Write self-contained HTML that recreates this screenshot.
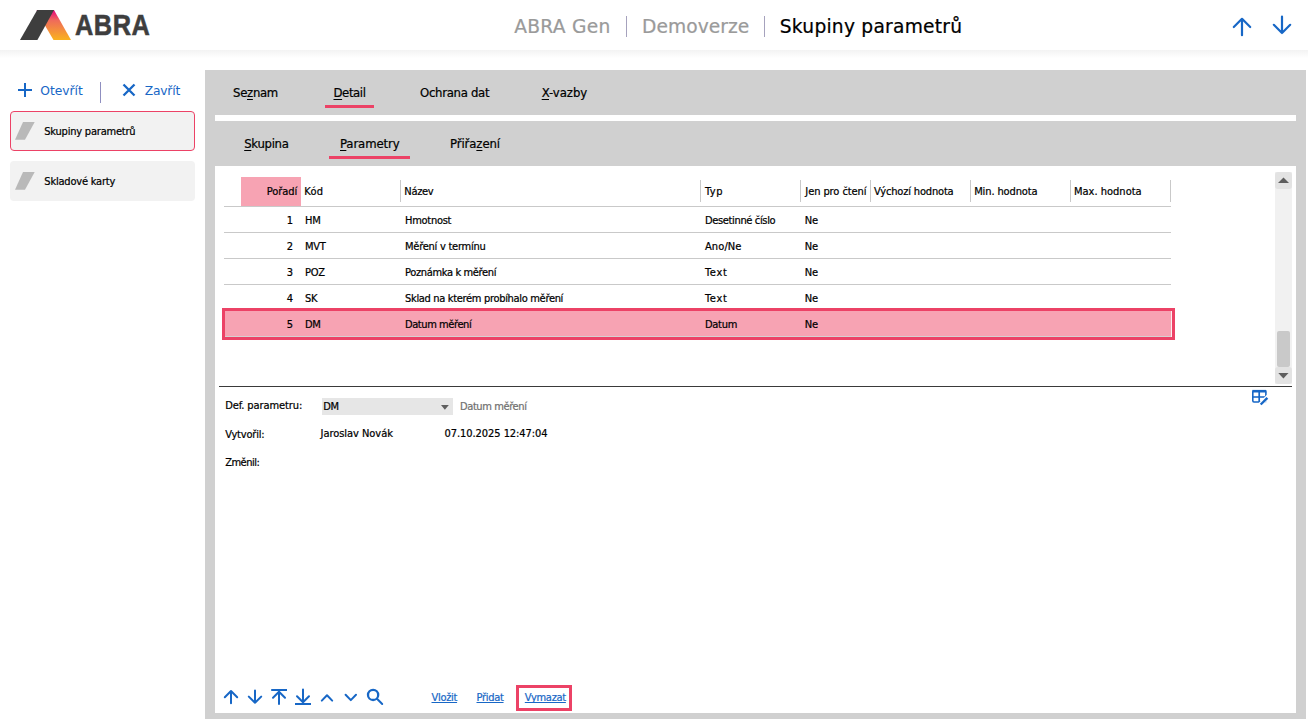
<!DOCTYPE html>
<html lang="cs">
<head>
<meta charset="utf-8">
<title>Skupiny parametrů</title>
<style>
html,body{margin:0;padding:0;background:#fff;}
body{width:1308px;height:719px;position:relative;overflow:hidden;font-family:"DejaVu Sans Condensed","DejaVu Sans","Liberation Sans",sans-serif;color:#000;}
.t{position:absolute;white-space:pre;line-height:20px;-webkit-text-stroke:0.22px currentColor;}
.b{position:absolute;}
.w{font-family:"DejaVu Sans","Liberation Sans",sans-serif;}
u{text-decoration:underline;text-underline-offset:1.5px;text-decoration-thickness:1px;}
.lnk{text-decoration:underline;text-underline-offset:1px;text-decoration-thickness:1px;text-decoration-skip-ink:none;}
svg{position:absolute;overflow:visible;}
</style>
</head>
<body>

<div class="b" style="left:0px;top:50px;width:1308px;height:8px;background:linear-gradient(#f3f3f3,#ffffff);"></div>
<svg style="left:20px;top:10px" width="52" height="30" viewBox="0 0 52 30">
<defs><linearGradient id="lg" x1="0" y1="0" x2="0" y2="1"><stop offset="0" stop-color="#e6007e"/><stop offset="0.35" stop-color="#ef6b5a"/><stop offset="1" stop-color="#f9b21e"/></linearGradient></defs>
<polygon points="16.5,0 34,0 51,30 33.5,30 25,15.5" fill="url(#lg)"/>
<polygon points="17.2,0 34,0 17.4,30 0,30" fill="#3e3e3e"/>
</svg>
<span class="t" style="left:75.4px;top:6.9px;line-height:36px;font-family:'Liberation Sans',sans-serif;font-weight:bold;font-size:29.4px;color:#3e3e3e;-webkit-text-stroke:0.55px #3e3e3e;letter-spacing:0.6px;transform-origin:0 0;transform:scaleX(0.862);">ABRA</span>
<span class="t w" style="top:17.34px;font-size:18.67px;left:514.20px;letter-spacing:0.28px;color:#9a9a9a;">ABRA Gen</span>
<div class="b" style="left:626px;top:16px;width:1px;height:21px;background:#a6a2bd;"></div>
<span class="t w" style="top:17.34px;font-size:18.67px;left:642.00px;letter-spacing:0.05px;color:#9a9a9a;">Demoverze</span>
<div class="b" style="left:764px;top:16px;width:1px;height:21px;background:#a6a2bd;"></div>
<span class="t w" style="top:17.34px;font-size:18.67px;left:779.80px;letter-spacing:0.23px;color:#000;">Skupiny parametrů</span>
<svg style="left:1230px;top:14px" width="64" height="24" viewBox="1230 14 64 24" fill="none" stroke="#1767c6" stroke-width="2.2" stroke-linecap="round" stroke-linejoin="round">
<path d="M1242 35.2V18.8M1233.8 27L1242 18.8L1250.2 27"/>
<path d="M1282 16.6V33M1273.8 24.8L1282 33L1290.2 24.8"/>
</svg>
<svg style="left:16px;top:80px" width="170" height="24" viewBox="16 80 170 24" fill="none" stroke="#1767c6" stroke-width="2" stroke-linecap="butt">
<path d="M18 90H32M25 83V97"/>
<path d="M123.5 84.5L134.5 95.5M134.5 84.5L123.5 95.5" stroke-width="2.3"/>
</svg>
<span class="t w" style="top:81.34px;font-size:12.3px;left:40.30px;letter-spacing:-0.02px;color:#1767c6;-webkit-text-stroke:0;">Otevřít</span>
<div class="b" style="left:100px;top:82px;width:1px;height:21px;background:#8f8fc0;"></div>
<span class="t w" style="top:81.34px;font-size:12.3px;left:144.70px;letter-spacing:-0.2px;color:#1767c6;-webkit-text-stroke:0;">Zavřít</span>
<div class="b" style="left:10px;top:111px;width:185px;height:40px;background:#f2f2f2;box-sizing:border-box;border:1px solid #ec4266;border-radius:4px;"></div>
<div class="b" style="left:10px;top:161px;width:185px;height:40px;background:#f2f2f2;border-radius:4px;"></div>
<svg style="left:15px;top:122px" width="20" height="18" viewBox="0 0 20 18"><polygon points="8,0 19.7,0 10,17.7 0,17.7" fill="#b9b9b9"/></svg>
<svg style="left:15px;top:172px" width="20" height="18" viewBox="0 0 20 18"><polygon points="8,0 19.7,0 10,17.7 0,17.7" fill="#b9b9b9"/></svg>
<span class="t " style="top:122.09px;font-size:11px;left:44.30px;letter-spacing:-0.21px;">Skupiny parametrů</span>
<span class="t " style="top:172.09px;font-size:11px;left:44.30px;letter-spacing:-0.2px;">Skladové karty</span>
<div class="b" style="left:205px;top:70px;width:1101px;height:649px;background:#d0d0d0;"></div>
<div class="b" style="left:215px;top:115px;width:1081px;height:6px;background:#fff;"></div>
<div class="b" style="left:215px;top:166px;width:1081px;height:547px;background:#fff;"></div>
<span class="t " style="top:82.50px;font-size:13px;left:233.00px;letter-spacing:-0.3px;">Se<u>z</u>nam</span>
<span class="t " style="top:82.50px;font-size:13px;left:333.50px;letter-spacing:-0.4px;"><u>D</u>etail</span>
<span class="t " style="top:82.50px;font-size:13px;left:420.00px;letter-spacing:-0.3px;">Ochrana dat</span>
<span class="t " style="top:82.50px;font-size:13px;left:541.70px;letter-spacing:-0.05px;"><u>X</u>-vazby</span>
<div class="b" style="left:325px;top:105px;width:49px;height:3px;background:#ec4266;"></div>
<span class="t " style="top:133.50px;font-size:13px;left:244.20px;letter-spacing:-0.3px;"><u>S</u>kupina</span>
<span class="t " style="top:133.50px;font-size:13px;left:340.00px;letter-spacing:-0.12px;"><u>P</u>arametry</span>
<span class="t " style="top:133.50px;font-size:13px;left:450.00px;letter-spacing:-0.1px;">Přiřa<u>z</u>ení</span>
<div class="b" style="left:329px;top:156px;width:81px;height:3px;background:#ec4266;"></div>
<div class="b" style="left:241px;top:177px;width:60px;height:29px;background:#f7a3b3;"></div>
<div class="b" style="left:224px;top:206px;width:947px;height:1px;background:#c9c9c9;"></div>
<div class="b" style="left:224px;top:232px;width:947px;height:1px;background:#c9c9c9;"></div>
<div class="b" style="left:224px;top:258px;width:947px;height:1px;background:#c9c9c9;"></div>
<div class="b" style="left:224px;top:284px;width:947px;height:1px;background:#c9c9c9;"></div>
<div class="b" style="left:400px;top:180px;width:1px;height:22px;background:#c9c9c9;"></div>
<div class="b" style="left:700px;top:180px;width:1px;height:22px;background:#c9c9c9;"></div>
<div class="b" style="left:800px;top:180px;width:1px;height:22px;background:#c9c9c9;"></div>
<div class="b" style="left:870px;top:180px;width:1px;height:22px;background:#c9c9c9;"></div>
<div class="b" style="left:970px;top:180px;width:1px;height:22px;background:#c9c9c9;"></div>
<div class="b" style="left:1070px;top:180px;width:1px;height:22px;background:#c9c9c9;"></div>
<div class="b" style="left:1170px;top:180px;width:1px;height:22px;background:#c9c9c9;"></div>
<span class="t " style="top:182.09px;font-size:11px;right:1010.80px;letter-spacing:-0.05px;">Pořadí</span>
<span class="t " style="top:182.09px;font-size:11px;left:304.30px;letter-spacing:0.25px;">Kód</span>
<span class="t " style="top:182.09px;font-size:11px;left:404.30px;letter-spacing:-0.3px;">Název</span>
<span class="t " style="top:182.09px;font-size:11px;left:705.00px;letter-spacing:0.5px;">Typ</span>
<span class="t " style="top:182.09px;font-size:11px;left:805.30px;letter-spacing:-0.08px;">Jen pro čtení</span>
<span class="t " style="top:182.09px;font-size:11px;left:874.00px;letter-spacing:-0.17px;">Výchozí hodnota</span>
<span class="t " style="top:182.09px;font-size:11px;left:974.20px;letter-spacing:-0.12px;">Min. hodnota</span>
<span class="t " style="top:182.09px;font-size:11px;left:1074.00px;letter-spacing:0.0px;">Max. hodnota</span>
<div class="b" style="left:222px;top:308px;width:953px;height:32px;background:#f7a3b3;box-sizing:border-box;border:3px solid #ec4266;"></div>
<div class="b" style="left:225px;top:336px;width:946px;height:1px;background:#d5d0d1;"></div>
<div class="b" style="left:1171px;top:311px;width:1px;height:26px;background:#fbeef0;"></div>
<span class="t " style="top:211.09px;font-size:11px;right:1015.00px;">1</span>
<span class="t " style="top:211.09px;font-size:11px;left:305.00px;letter-spacing:-0.3px;">HM</span>
<span class="t " style="top:211.09px;font-size:11px;left:405.00px;letter-spacing:-0.27px;">Hmotnost</span>
<span class="t " style="top:211.09px;font-size:11px;left:705.00px;letter-spacing:-0.35px;">Desetinné číslo</span>
<span class="t " style="top:211.09px;font-size:11px;left:804.80px;letter-spacing:-0.3px;">Ne</span>
<span class="t " style="top:237.09px;font-size:11px;right:1015.00px;">2</span>
<span class="t " style="top:237.09px;font-size:11px;left:305.00px;letter-spacing:-0.3px;">MVT</span>
<span class="t " style="top:237.09px;font-size:11px;left:405.00px;letter-spacing:-0.25px;">Měření v termínu</span>
<span class="t " style="top:237.09px;font-size:11px;left:705.00px;letter-spacing:0.1px;">Ano/Ne</span>
<span class="t " style="top:237.09px;font-size:11px;left:804.80px;letter-spacing:-0.3px;">Ne</span>
<span class="t " style="top:263.09px;font-size:11px;right:1015.00px;">3</span>
<span class="t " style="top:263.09px;font-size:11px;left:305.00px;letter-spacing:-0.3px;">POZ</span>
<span class="t " style="top:263.09px;font-size:11px;left:405.00px;letter-spacing:-0.35px;">Poznámka k měření</span>
<span class="t " style="top:263.09px;font-size:11px;left:705.00px;letter-spacing:0.7px;">Text</span>
<span class="t " style="top:263.09px;font-size:11px;left:804.80px;letter-spacing:-0.3px;">Ne</span>
<span class="t " style="top:289.09px;font-size:11px;right:1015.00px;">4</span>
<span class="t " style="top:289.09px;font-size:11px;left:305.00px;letter-spacing:-0.3px;">SK</span>
<span class="t " style="top:289.09px;font-size:11px;left:405.00px;letter-spacing:-0.32px;">Sklad na kterém probíhalo měření</span>
<span class="t " style="top:289.09px;font-size:11px;left:705.00px;letter-spacing:0.7px;">Text</span>
<span class="t " style="top:289.09px;font-size:11px;left:804.80px;letter-spacing:-0.3px;">Ne</span>
<span class="t " style="top:315.09px;font-size:11px;right:1015.00px;">5</span>
<span class="t " style="top:315.09px;font-size:11px;left:305.00px;letter-spacing:-0.3px;">DM</span>
<span class="t " style="top:315.09px;font-size:11px;left:405.00px;letter-spacing:-0.42px;">Datum měření</span>
<span class="t " style="top:315.09px;font-size:11px;left:705.00px;letter-spacing:-0.3px;">Datum</span>
<span class="t " style="top:315.09px;font-size:11px;left:804.80px;letter-spacing:-0.3px;">Ne</span>
<div class="b" style="left:1275px;top:172px;width:17px;height:212px;background:#f1f1f1;"></div>
<div class="b" style="left:1275px;top:172px;width:17px;height:17px;background:#e3e3e3;border-radius:3px;"></div>
<div class="b" style="left:1275px;top:367px;width:17px;height:17px;background:#e3e3e3;border-radius:3px;"></div>
<div class="b" style="left:1277px;top:331px;width:13px;height:36px;background:#c9c9c9;border-radius:2px;"></div>
<svg style="left:1275px;top:172px" width="17" height="212" viewBox="1275 172 17 212"><polygon points="1278,183 1283.5,177.4 1289,183" fill="#5e5e5e"/><polygon points="1278.3,373 1288.5,373 1283.4,378.4" fill="#5e5e5e"/></svg>
<div class="b" style="left:219px;top:386px;width:1073px;height:1px;background:#3a3a3a;"></div>
<svg style="left:1251px;top:389px" width="18" height="18" viewBox="1251 389 18 18" fill="none" stroke="#1767c6">
<rect x="1252.8" y="390.7" width="13.1" height="11.3" rx="1.2" stroke-width="1.6"/>
<path d="M1252.4 391.2H1266.3" stroke-width="2.6"/>
<path d="M1252.8 397H1265.9" stroke-width="1.55"/><path d="M1259.2 391V402" stroke-width="1.7"/>
<path d="M1257.8 407.2L1269.6 395.4" stroke="#fff" stroke-width="4.6"/>
<path d="M1260.7 404.5L1267.4 397.8" stroke-width="2.35"/>
</svg>
<span class="t " style="top:395.69px;font-size:11px;left:225.20px;letter-spacing:-0.1px;">Def. parametru:</span>
<div class="b" style="left:322px;top:398px;width:131px;height:17px;background:#e6e6e6;"></div>
<span class="t " style="top:397.09px;font-size:11px;left:323.30px;letter-spacing:-0.3px;">DM</span>
<svg style="left:440px;top:404px" width="10" height="7" viewBox="440 404 10 7"><polygon points="441,405 448.8,405 444.9,409.8" fill="#5e5e5e"/></svg>
<span class="t " style="top:396.79px;font-size:11px;left:460.00px;letter-spacing:-0.4px;color:#707070;">Datum měření</span>
<span class="t " style="top:424.59px;font-size:11px;left:225.20px;letter-spacing:-0.2px;">Vytvořil:</span>
<span class="t " style="top:423.89px;font-size:11px;left:320.60px;letter-spacing:-0.05px;">Jaroslav Novák</span>
<span class="t " style="top:423.89px;font-size:11px;left:444.50px;letter-spacing:-0.06px;">07.10.2025 12:47:04</span>
<span class="t " style="top:452.89px;font-size:11px;left:225.20px;letter-spacing:-0.5px;">Změnil:</span>
<svg style="left:222px;top:687px" width="164" height="20" viewBox="222 687 164 20" fill="none" stroke="#1767c6" stroke-width="2" stroke-linecap="round" stroke-linejoin="round">
<path d="M231 703.2V691M224.8 697.2L231 691L237.2 697.2"/>
<path d="M255 690.6V702.8M248.8 696.6L255 702.8L261.2 696.6"/>
<path d="M271.2 690H287" stroke-linecap="butt"/><path d="M279 704V691.6M273 697.8L279 691.8L285 697.8"/>
<path d="M295 704H311" stroke-linecap="butt"/><path d="M303 689.6V702M297 696.2L303 702.2L309 696.2"/>
<path d="M321.8 700.6L327 695.2L332.2 700.6"/>
<path d="M345.6 694.8L350.8 700.1L356 694.8"/>
<circle cx="373.1" cy="694.9" r="5.1" stroke-width="2.3"/><path d="M377 698.8L382.2 704"/>
</svg>
<span class="t lnk" style="top:688.09px;font-size:11px;left:431.50px;letter-spacing:-0.3px;color:#1767c6;">Vložit</span>
<span class="t lnk" style="top:688.09px;font-size:11px;left:476.50px;letter-spacing:-0.3px;color:#1767c6;">Přidat</span>
<span class="t lnk" style="top:688.09px;font-size:11px;left:524.80px;letter-spacing:-0.3px;color:#1767c6;">Vymazat</span>
<div class="b" style="left:516px;top:685px;width:56px;height:26px;background:transparent;box-sizing:border-box;border:3px solid #ec4266;"></div>
</body>
</html>
